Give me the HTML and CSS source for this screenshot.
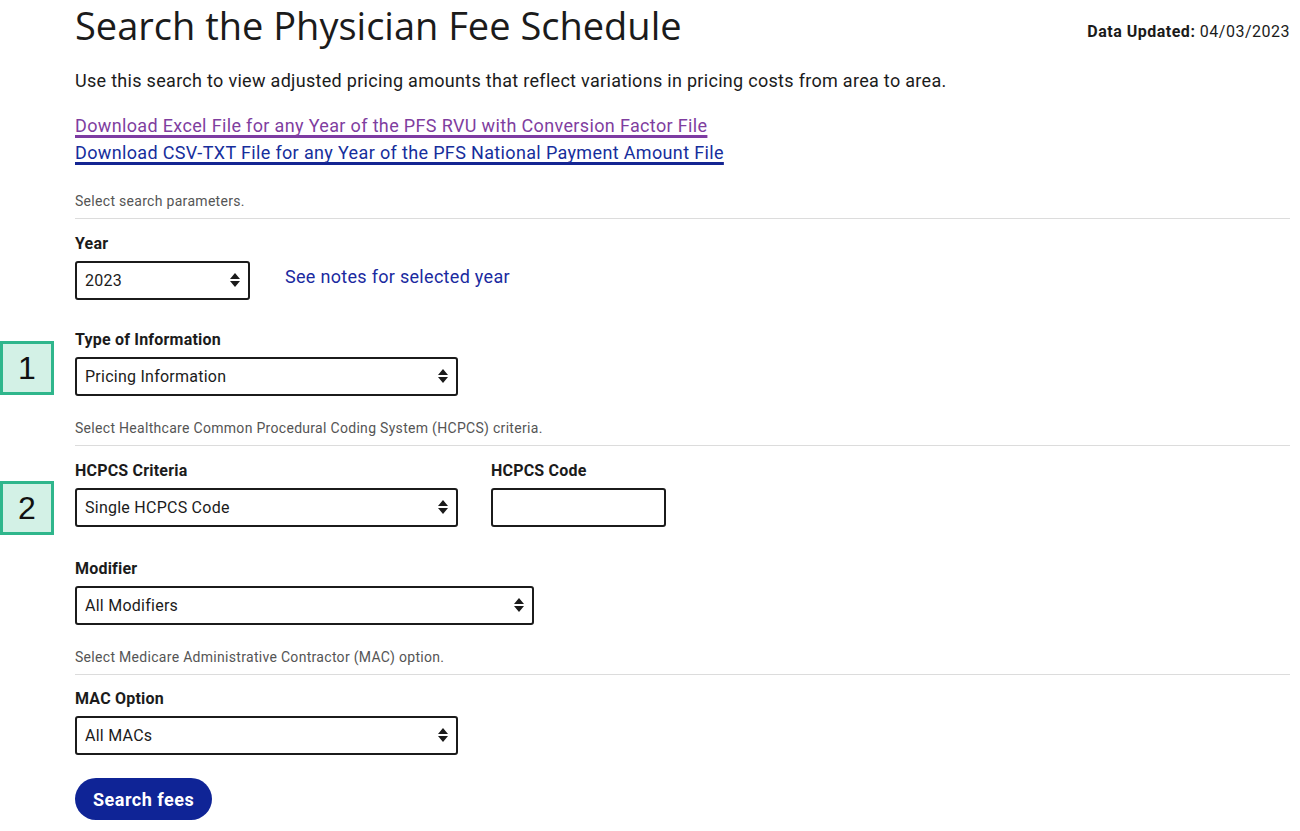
FILE: index.html
```html
<!DOCTYPE html>
<html lang="en">
<head>
<meta charset="utf-8">
<title>Search the Physician Fee Schedule</title>
<link rel="stylesheet" href="styles.css">
</head>
<body>
<main class="page">
  <header class="top">
    <h1 class="title">Search the Physician Fee Schedule</h1>
    <p class="updated"><strong>Data Updated:</strong> 04/03/2023</p>
  </header>
  <p class="intro">Use this search to view adjusted pricing amounts that reflect variations in pricing costs from area to area.</p>
  <div class="downloads">
    <a class="dl visited" href="#">Download Excel File for any Year of the PFS RVU with Conversion Factor File</a>
    <a class="dl" href="#">Download CSV-TXT File for any Year of the PFS National Payment Amount File</a>
  </div>

  <p class="section-hint first">Select search parameters.</p>
  <div class="field">
    <label class="label">Year</label>
    <div class="inline">
      <div class="select-wrap w-year">
        <select class="select"><option>2023</option></select>
        <svg class="arrows" width="10" height="14" viewBox="0 0 10 14"><path d="M5 0 L10 6 H0 Z M0 8 H10 L5 14 Z" fill="#1b1b1b"/></svg>
      </div>
      <a class="notes" href="#">See notes for selected year</a>
    </div>
  </div>

  <div class="field field-gap">
    <span class="badge badge-1">1</span>
    <label class="label">Type of Information</label>
    <div class="select-wrap w-mid">
      <select class="select"><option>Pricing Information</option></select>
      <svg class="arrows" width="10" height="14" viewBox="0 0 10 14"><path d="M5 0 L10 6 H0 Z M0 8 H10 L5 14 Z" fill="#1b1b1b"/></svg>
    </div>
  </div>

  <p class="section-hint">Select Healthcare Common Procedural Coding System (HCPCS) criteria.</p>
  <div class="field-row">
    <span class="badge badge-2">2</span>
    <div class="field">
      <label class="label">HCPCS Criteria</label>
      <div class="select-wrap w-mid">
        <select class="select"><option>Single HCPCS Code</option></select>
        <svg class="arrows" width="10" height="14" viewBox="0 0 10 14"><path d="M5 0 L10 6 H0 Z M0 8 H10 L5 14 Z" fill="#1b1b1b"/></svg>
      </div>
    </div>
    <div class="field">
      <label class="label">HCPCS Code</label>
      <input class="text-input" type="text">
    </div>
  </div>

  <div class="field field-gap-lg">
    <label class="label">Modifier</label>
    <div class="select-wrap w-wide">
      <select class="select"><option>All Modifiers</option></select>
      <svg class="arrows" width="10" height="14" viewBox="0 0 10 14"><path d="M5 0 L10 6 H0 Z M0 8 H10 L5 14 Z" fill="#1b1b1b"/></svg>
    </div>
  </div>

  <p class="section-hint">Select Medicare Administrative Contractor (MAC) option.</p>
  <div class="field field-mac">
    <label class="label">MAC Option</label>
    <div class="select-wrap w-mid">
      <select class="select"><option>All MACs</option></select>
      <svg class="arrows" width="10" height="14" viewBox="0 0 10 14"><path d="M5 0 L10 6 H0 Z M0 8 H10 L5 14 Z" fill="#1b1b1b"/></svg>
    </div>
  </div>

  <button class="btn" type="button">Search fees</button>
</main>
</body>
</html>
```

FILE: styles.css
```css
html, body {
  margin: 0;
  padding: 0;
  background: #fff;
}
body {
  font-family: Roboto, "Liberation Sans", Arial, sans-serif;
  color: #1b1b1b;
}
.page {
  padding: 0 10px 0 75px;
}
.top {
  display: flex;
  justify-content: space-between;
  align-items: flex-start;
}
.title {
  margin: 3px 0 0;
  font-family: "Open Sans", Roboto, sans-serif;
  font-weight: 400;
  font-size: 38px;
  line-height: 44px;
  color: #1b1b1b;
}
.updated {
  margin: 22px 0 0;
  font-size: 16px;
  line-height: 20px;
  letter-spacing: 0.5px;
}
.updated strong {
  font-weight: 700;
}
.intro {
  margin: 22px 0 0;
  font-size: 18px;
  line-height: 24px;
  letter-spacing: 0.3px;
}
.downloads {
  margin-top: 19px;
  display: flex;
  flex-direction: column;
  align-items: flex-start;
}
.dl {
  font-size: 18px;
  line-height: 27px;
  letter-spacing: 0.35px;
  color: #162e9c;
  text-decoration: underline;
  text-decoration-thickness: 3px;
  text-underline-offset: 3px;
  text-decoration-skip-ink: none;
  text-decoration-color: #142592;
}
.dl.visited {
  color: #7f3e9f;
  text-decoration-color: #7d3ca2;
}
.section-hint {
  margin: 23px 0 0;
  padding-bottom: 8px;
  font-size: 14px;
  line-height: 18px;
  letter-spacing: 0.3px;
  color: #555;
  border-bottom: 1px solid #dcdcdc;
}
.section-hint.first {
  margin-top: 26px;
}
.field {
  margin-top: 15px;
  position: relative;
}
.field-gap {
  margin-top: 30px;
}
.field-gap-lg {
  margin-top: 32px;
}
.field-mac {
  margin-top: 14px;
}
.label {
  display: block;
  font-size: 16px;
  font-weight: 700;
  line-height: 20px;
  letter-spacing: 0.2px;
  margin-bottom: 7px;
}
.inline {
  display: flex;
  align-items: center;
  gap: 35px;
}
.notes {
  font-size: 18px;
  letter-spacing: 0.3px;
  color: #1a2aa0;
  text-decoration: none;
  margin-top: -8px;
}
.select-wrap {
  position: relative;
  height: 39px;
}
.w-year { width: 175px; }
.w-mid { width: 383px; }
.w-wide { width: 459px; }
.select {
  appearance: none;
  -webkit-appearance: none;
  box-sizing: border-box;
  width: 100%;
  height: 39px;
  border: 2px solid #1b1b1b;
  border-radius: 3px;
  background: #fff;
  padding: 0 30px 0 8px;
  font-family: Roboto, "Liberation Sans", sans-serif;
  font-size: 16px;
  letter-spacing: 0.25px;
  color: #1b1b1b;
}
.arrows {
  position: absolute;
  right: 10px;
  top: 12px;
  pointer-events: none;
}
.field-row {
  position: relative;
  display: flex;
  gap: 33px;
}
.text-input {
  box-sizing: border-box;
  width: 175px;
  height: 39px;
  border: 2px solid #1b1b1b;
  border-radius: 3px;
  background: #fff;
}
.badge {
  position: absolute;
  left: -75px;
  box-sizing: border-box;
  width: 54px;
  height: 54px;
  background: #d3f1e6;
  border: 3px solid #2fb68c;
  font-family: "Liberation Sans", Arial, sans-serif;
  font-size: 32px;
  line-height: 48px;
  text-align: center;
  color: #111;
}
.badge-1 { top: 11px; }
.badge-2 { top: 35px; }
.btn {
  margin-top: 23px;
  height: 42px;
  padding: 0 18px;
  border: 0;
  border-radius: 21px;
  background: #0f2496;
  color: #fff;
  font-family: Roboto, "Liberation Sans", sans-serif;
  font-weight: 700;
  font-size: 18px;
  letter-spacing: 0.5px;
}
```
